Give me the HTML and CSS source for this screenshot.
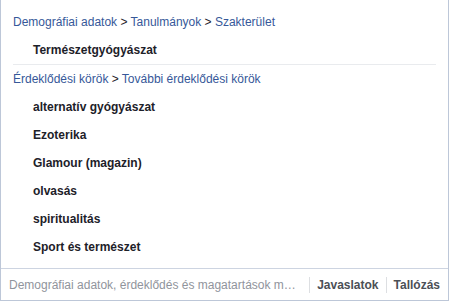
FILE: index.html
```html
<!DOCTYPE html>
<html lang="hu">
<head>
<meta charset="utf-8">
<link rel="stylesheet" href="styles.css">
</head>
<body>
<div class="panel">
  <div class="body">
    <div class="group first">
      <div class="crumb"><a>Demográfiai adatok</a> &gt; <a>Tanulmányok</a> &gt; <a>Szakterület</a></div>
      <div class="item">Természetgyógyászat</div>
    </div>
    <div class="group">
      <div class="crumb"><a>Érdeklődési körök</a> &gt; <a>További érdeklődési körök</a></div>
      <div class="item">alternatív gyógyászat</div>
      <div class="item">Ezoterika</div>
      <div class="item">Glamour (magazin)</div>
      <div class="item">olvasás</div>
      <div class="item">spiritualitás</div>
      <div class="item">Sport és természet</div>
    </div>
  </div>
  <div class="footer">
    <div class="search">Demográfiai adatok, érdeklődés és magatartások m…</div>
    <div class="tab">Javaslatok</div>
    <div class="tab">Tallózás</div>
  </div>
</div>
</body>
</html>
```
FILE: styles.css
```css
html, body {
  margin: 0;
  padding: 0;
  background: #fff;
}
body {
  font-family: "Liberation Sans", Arial, Helvetica, sans-serif;
  font-size: 12px;
}
.panel {
  width: 447px;
  height: 300px;
  border: 1px solid #bdc7d8;
  border-top: none;
  display: flex;
  flex-direction: column;
}
.body {
  flex: 1;
  padding-top: 8px;
}
.group {
  margin: 0 12px;
}
.group.first {
  border-bottom: 1px solid #e9ebee;
}
.crumb {
  line-height: 28px;
  color: #4267b2;
}
.crumb a {
  color: #365899;
}
.crumb {
  color: #1d2129;
}
.item {
  line-height: 28px;
  padding-left: 20px;
  font-weight: bold;
  color: #1d2129;
}
.footer {
  height: 31px;
  border-top: 1px solid #cdd4e1;
  display: flex;
  align-items: center;
  padding: 0 8px 0 8px;
}
.search {
  flex: 1;
  color: #90949c;
  white-space: nowrap;
  overflow: hidden;
}
.tab {
  font-weight: bold;
  color: #4b4f56;
  border-left: 1px solid #dddfe2;
  padding: 0 0 0 7px;
  margin-left: 7px;
  line-height: 16px;
}
```
